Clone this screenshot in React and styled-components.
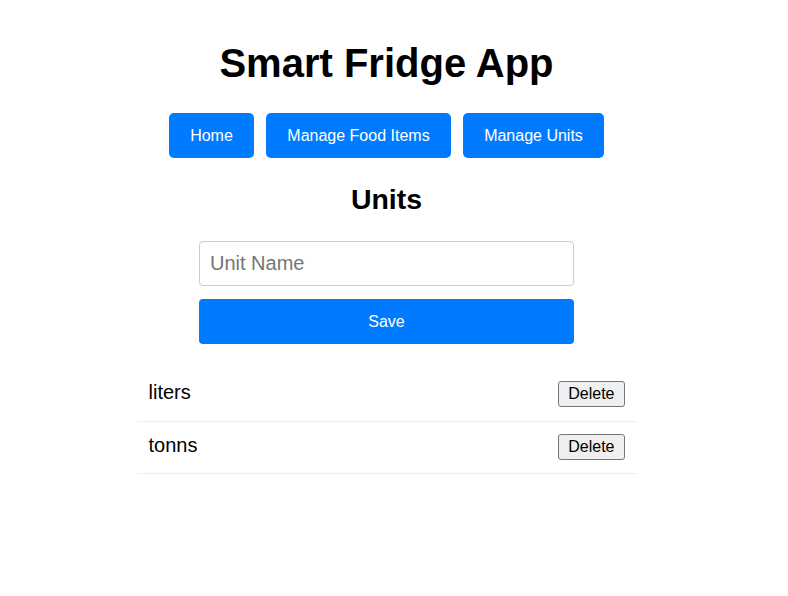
import React from "react";
import styled, { createGlobalStyle } from "styled-components";

const GlobalStyle = createGlobalStyle`
  html, body { margin: 0; padding: 0; background: #fff; }
  body {
    padding: 8px 23px 8px 8px;
    font-family: "Liberation Sans", Arial, sans-serif;
    color: #000;
  }
`;

const Page = styled.div`
  display: flex;
  flex-direction: column;
  align-items: center;
`;

const Title = styled.h1`
  margin: 32px 0 27px;
  font-size: 40px;
  font-weight: 700;
  line-height: 46px;
`;

const Nav = styled.nav`
  display: flex;
  gap: 12.5px;
`;

const NavButton = styled.button`
  font-family: "Liberation Sans", Arial, sans-serif;
  font-size: 16px;
  line-height: 19px;
  padding: 13px 21px;
  border: none;
  border-radius: 5px;
  background: #007bff;
  color: #fff;
  cursor: pointer;
`;

const Heading = styled.h2`
  margin: 25px 0 26px;
  font-size: 28.5px;
  font-weight: 700;
  line-height: 32px;
`;

const Form = styled.form`
  width: 375px;
  display: flex;
  flex-direction: column;
  gap: 13px;
`;

const Input = styled.input`
  box-sizing: border-box;
  width: 100%;
  height: 45px;
  padding: 10px;
  font-family: "Liberation Sans", Arial, sans-serif;
  font-size: 20px;
  border: 1px solid #ccc;
  border-radius: 4px;
  outline: none;
  &::placeholder { color: #757575; }
`;

const SaveButton = styled.button`
  width: 100%;
  height: 45px;
  font-family: "Liberation Sans", Arial, sans-serif;
  font-size: 16px;
  border: none;
  border-radius: 4px;
  background: #007bff;
  color: #fff;
  cursor: pointer;
`;

const List = styled.ul`
  list-style: none;
  width: 500px;
  margin: 25px 0 0;
  padding: 0;
`;

const Item = styled.li`
  display: flex;
  justify-content: space-between;
  align-items: flex-start;
  padding: 12px 12px 13.5px;
  border-bottom: 1px solid #eee;
`;

const ItemName = styled.span`
  font-size: 20px;
  line-height: 23px;
`;

const DeleteButton = styled.button`
  font-family: "Liberation Sans", Arial, sans-serif;
  font-size: 16px;
  line-height: 18px;
  padding: 3px 9px;
  background: #efefef;
  color: #000;
  border: 1px solid #767676;
  border-radius: 3px;
  cursor: pointer;
`;

const units = ["liters", "tonns"];

export default function App() {
  return (
    <>
      <GlobalStyle />
      <Page>
        <Title>Smart Fridge App</Title>
        <Nav>
          <NavButton>Home</NavButton>
          <NavButton>Manage Food Items</NavButton>
          <NavButton>Manage Units</NavButton>
        </Nav>
        <Heading>Units</Heading>
        <Form onSubmit={(e) => e.preventDefault()}>
          <Input placeholder="Unit Name" />
          <SaveButton type="submit">Save</SaveButton>
        </Form>
        <List>
          {units.map((u) => (
            <Item key={u}>
              <ItemName>{u}</ItemName>
              <DeleteButton>Delete</DeleteButton>
            </Item>
          ))}
        </List>
      </Page>
    </>
  );
}
